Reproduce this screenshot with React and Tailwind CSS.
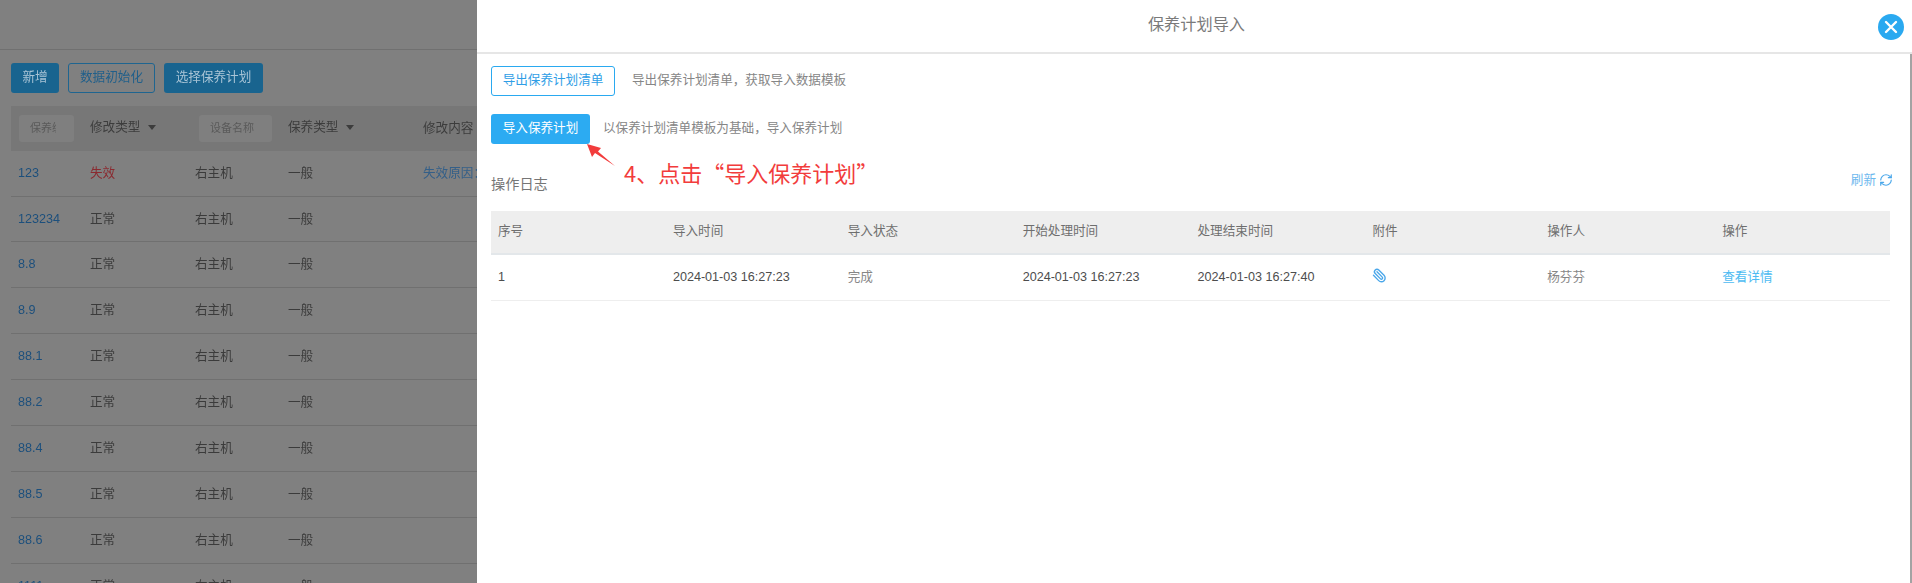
import React from "react";
import { RefreshCw, Paperclip } from "lucide-react";

const font = "font-['Liberation_Sans','Noto_Sans_CJK_SC',sans-serif]";
const rowIds = ["123", "123234", "8.8", "8.9", "88.1", "88.2", "88.4", "88.5", "88.6", "1111"];
const cols = "grid grid-cols-[72px_105px_93px_135px_1fr]";

function Caret() {
  return (
    <svg width="8" height="5" viewBox="0 0 8 5" className="ml-2 inline-block align-middle">
      <polygon points="0,0 8,0 4,5" fill="#3c3c3c" />
    </svg>
  );
}

function Background() {
  return (
    <div className="h-full w-[477px] shrink-0 overflow-hidden bg-[#808080]">
      <div className="h-full text-[12.6px] text-[#3b3b3b] blur-[0.4px]">
        <div className="h-[50px] border-b border-[#707070]" />
        <div className="flex gap-[9px] pl-[11px] pt-[13px]">
          <div className="flex h-[30px] w-[48px] items-center justify-center rounded-[3px] bg-[#19648f] pb-[2px] text-[#a9c4d6]">新增</div>
          <div className="flex h-[30px] w-[87px] items-center justify-center rounded-[3px] border border-[#1f6590] pb-[2px] text-[#205f8a]">数据初始化</div>
          <div className="flex h-[30px] w-[99px] items-center justify-center rounded-[3px] bg-[#19648f] pb-[2px] text-[#a9c4d6]">选择保养计划</div>
        </div>
        <div className="ml-[11px] mt-[13px]">
          <div className={`${cols} h-[45px] items-center bg-[#777777] text-[#3c3c3c]`}>
            <div className="pl-[8px]">
              <div className="flex h-[27px] w-[55px] items-center rounded-[3px] bg-[#7f7f7f] pl-[11px] text-[11px] text-[#5a5a5a]">
                <span className="w-[26px] overflow-hidden whitespace-nowrap">保养编号</span>
              </div>
            </div>
            <div className="pb-[2px] pl-[7px]">修改类型<Caret /></div>
            <div className="pl-[11px]">
              <div className="flex h-[27px] w-[73px] items-center rounded-[3px] bg-[#7f7f7f] pl-[11px] text-[11px] text-[#5a5a5a]">设备名称</div>
            </div>
            <div className="pb-[2px] pl-[7px]">保养类型<Caret /></div>
            <div className="pl-[7px]">修改内容</div>
          </div>
          {rowIds.map((id, i) => (
            <div key={id} className={`${cols} ${i === 1 ? "h-[45px]" : "h-[46px]"} items-center border-b border-[#707070]`}>
              <div className="pl-[7px] text-[#1c4f7c]">{id}</div>
              <div className={i === 0 ? "pl-[7px] text-[#8a2a30]" : "pl-[7px]"}>{i === 0 ? "失效" : "正常"}</div>
              <div className="pl-[7px]">右主机</div>
              <div className="pl-[7px]">一般</div>
              <div className="overflow-hidden whitespace-nowrap pl-[7px] text-[#345f88]">{i === 0 ? "失效原因：" : ""}</div>
            </div>
          ))}
        </div>
      </div>
    </div>
  );
}

function Panel() {
  const heads = ["序号", "导入时间", "导入状态", "开始处理时间", "处理结束时间", "附件", "操作人", "操作"];
  return (
    <div className="relative flex h-full flex-1 flex-col bg-white text-[12.6px] text-[#6e6e6e]">
      <div className="relative flex h-[54px] items-center justify-center border-b-2 border-[#e6e6e6] pb-[2px] text-[16.2px] text-[#7a7a7a]">
        <span className="-mt-[1px] ml-[4px]">保养计划导入</span>
        <button className="absolute right-[8px] top-[14px] flex h-[26px] w-[26px] items-center justify-center rounded-full bg-[#2aa9f0]">
          <svg width="14" height="14" viewBox="0 0 14 14" fill="none" stroke="#ffffff" strokeWidth="2.4" strokeLinecap="round">
            <path d="M2 2 L12 12 M12 2 L2 12" />
          </svg>
        </button>
      </div>
      <div className="flex-1 border-r-2 border-[#a3a3a3] pl-[14px] pr-[20px]">
        <div className="mt-[12px] flex items-center">
          <button className="flex h-[30px] w-[124px] items-center justify-center rounded-[3px] border border-[#2aa9f0] pb-[2px] text-[#2f9ee6]">导出保养计划清单</button>
          <span className="ml-[17px] pb-[2px] text-[#868686]">导出保养计划清单，获取导入数据模板</span>
        </div>
        <div className="mt-[18px] flex items-center">
          <button className="flex h-[30px] w-[99px] items-center justify-center rounded-[3px] bg-[#2cabf2] pb-[2px] text-white">导入保养计划</button>
          <span className="ml-[13px] pb-[2px] text-[#868686]">以保养计划清单模板为基础，导入保养计划</span>
        </div>
        <div className="mt-[26px] flex h-[41px] items-start justify-between">
          <span className="pt-[4px] text-[14.2px] leading-5 text-[#767676]">操作日志</span>
          <span className="-mr-[3px] flex items-center gap-[3px] leading-5 text-[#6db8ee]">
            刷新
            <RefreshCw size={14} strokeWidth={2} className="text-[#4aa7ea]" />
          </span>
        </div>
        <div className="grid h-[44px] grid-cols-8 items-center border-b-2 border-[#e3e7ea] bg-[#eeeeee]">
          {heads.map((h) => (
            <div key={h} className="pl-[7px] pb-[2px]">{h}</div>
          ))}
        </div>
        <div className="grid h-[46px] grid-cols-8 items-center border-b border-[#eeeeee]">
          <div className="pl-[7px] text-[#4d4d4d]">1</div>
          <div className="pl-[7px] text-[#4d4d4d]">2024-01-03 16:27:23</div>
          <div className="pl-[7px] text-[#868686]">完成</div>
          <div className="pl-[7px] text-[#4d4d4d]">2024-01-03 16:27:23</div>
          <div className="pl-[7px] text-[#4d4d4d]">2024-01-03 16:27:40</div>
          <div className="pl-[7px]">
            <Paperclip size={15} strokeWidth={2.2} className="-mt-[5px] -scale-x-100 text-[#4aa7ea]" />
          </div>
          <div className="pl-[7px] text-[#868686]">杨芬芬</div>
          <div className="pl-[7px] text-[#4dbbf2]">查看详情</div>
        </div>
      </div>
      <svg width="32" height="26" viewBox="0 0 32 26" className="absolute left-[108px] top-[143px]">
        <polygon points="2,1 16,5 13,8.5 30,23 10,10 7,14" fill="#f23c3c" />
      </svg>
      <div className="absolute left-[147px] top-[156px] font-['Noto_Sans_CJK_SC',sans-serif] text-[22px] leading-8 text-[#f23c3c]">4、点击“导入保养计划”</div>
    </div>
  );
}

export default function App() {
  return (
    <div className={`flex h-[583px] w-[1912px] overflow-hidden ${font}`}>
      <Background />
      <Panel />
    </div>
  );
}
